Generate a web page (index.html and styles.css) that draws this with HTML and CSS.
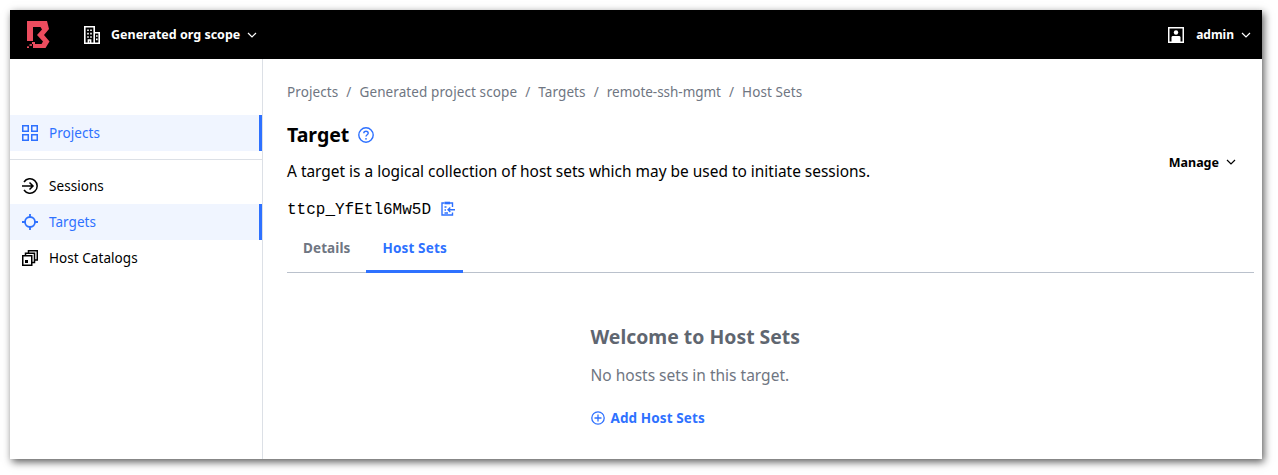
FILE: index.html
```html
<!DOCTYPE html>
<html lang="en">
<head>
    <meta charset="UTF-8">
    <meta name="viewport" content="width=device-width, initial-scale=1.0">
    <title>Target - Host Sets</title>
    <link rel="stylesheet" href="styles.css">
</head>
<body>
    <div class="window">
        <header class="topbar">
            <svg class="logo" viewBox="0 0 23 27" width="23" height="27">
                <path fill="#ec4c5e" d="M0 0H20L22 8L17 14L22.5 20.5L18.5 27H6V23H14.5L16 20.5L10 14L15 8.5L13.5 6H6V20H0Z"/>
                <rect fill="#ec4c5e" x="5" y="21" width="3" height="2"/>
                <rect fill="#ec4c5e" x="2.5" y="23.2" width="2.5" height="1.6"/>
                <rect fill="#ec4c5e" x="0" y="25.4" width="2" height="1.6"/>
            </svg>
            <div class="scope">
                <svg viewBox="0 0 16 18" width="16" height="18" fill="none" stroke="#fff" stroke-width="1.6">
                    <path d="M0.8 17.2V0.8H10.2V17.2M10.2 6.8H15.2V17.2M0 17.2H16"/>
                    <path d="M3.2 4.2H4.8M6.2 4.2H7.8M3.2 7.6H4.8M6.2 7.6H7.8M3.2 11H4.8M6.2 11H7.8M12 10H13.6M12 13.4H13.6M4.4 17V14H6.6V17"/>
                </svg>
                <span>Generated org scope</span>
                <svg class="chev" viewBox="0 0 10 6" width="10" height="6"><path d="M1 1L5 5L9 1"/></svg>
            </div>
            <div class="user">
                <svg viewBox="0 0 16 16" width="16" height="16">
                    <rect x="0.75" y="0.75" width="14.5" height="14.5" fill="none" stroke="#fff" stroke-width="1.5"/>
                    <circle cx="8" cy="5.5" r="2.2" fill="#fff"/>
                    <path fill="#fff" d="M3.5 15V10.5C3.5 9.5 4.2 9 5 9H11C11.8 9 12.5 9.5 12.5 10.5V15Z"/>
                </svg>
                <span>admin</span>
                <svg class="chev" viewBox="0 0 10 6" width="10" height="6"><path d="M1 1L5 5L9 1"/></svg>
            </div>
        </header>
        <div class="layout">
            <aside class="sidebar">
                <a class="nav-item active">
                    <svg viewBox="0 0 16 16" width="16" height="16" fill="none" stroke="currentColor" stroke-width="1.5">
                        <rect x="0.75" y="0.75" width="5.5" height="5.5"/>
                        <rect x="9.75" y="0.75" width="5.5" height="5.5"/>
                        <rect x="0.75" y="9.75" width="5.5" height="5.5"/>
                        <rect x="9.75" y="9.75" width="5.5" height="5.5"/>
                    </svg>
                    Projects
                </a>
                <div class="divider"></div>
                <a class="nav-item">
                    <svg viewBox="0 0 16 16" width="16" height="16" fill="none" stroke="currentColor" stroke-width="1.5">
                        <path d="M2 4A7.2 7.2 0 1 1 2 12"/>
                        <path d="M0 8H11M7.5 4.5L11 8L7.5 11.5"/>
                    </svg>
                    Sessions
                </a>
                <a class="nav-item active">
                    <svg viewBox="0 0 16 16" width="16" height="16" fill="none" stroke="currentColor" stroke-width="1.8">
                        <circle cx="8" cy="8" r="5"/>
                        <path d="M8 0V4M8 12V16M0 8H4M12 8H16"/>
                    </svg>
                    Targets
                </a>
                <a class="nav-item">
                    <svg viewBox="0 0 16 16" width="16" height="16" fill="none" stroke="currentColor" stroke-width="1.5">
                        <rect x="0.75" y="5.75" width="9" height="9.5"/>
                        <path d="M3.5 5V3.2H12.5V12.5H10M6.5 2.8V0.8H15.3V10H13"/>
                        <rect x="3" y="10" width="3" height="3" fill="currentColor" stroke="none"/>
                    </svg>
                    Host Catalogs
                </a>
            </aside>
            <main class="content">
                <nav class="breadcrumbs">
                    <a>Projects</a><span>/</span>
                    <a>Generated project scope</a><span>/</span>
                    <a>Targets</a><span>/</span>
                    <a class="tight">remote-ssh-mgmt</a><span>/</span>
                    <a>Host Sets</a>
                </nav>
                <div class="page-head">
                    <div>
                        <h1>Target
                            <svg viewBox="0 0 16 16" width="16" height="16" fill="none" stroke="#2e71ff" stroke-width="1.4">
                                <circle cx="8" cy="8" r="7.2"/>
                                <path d="M5.8 6.2C5.8 3.6 10.2 3.6 10.2 6.2C10.2 7.8 8 7.8 8 9.6"/>
                                <circle cx="8" cy="11.8" r="0.9" fill="#2e71ff" stroke="none"/>
                            </svg>
                        </h1>
                        <p class="desc">A target is a logical collection of host sets which may be used to initiate sessions.</p>
                        <div class="target-id">
                            <code>ttcp_YfEtl6Mw5D</code>
                            <svg viewBox="0 0 14 15" width="14" height="15" fill="none" stroke="#2e71ff" stroke-width="1.4">
                                <path d="M3.5 2H1V14H11.5V11.5M9 2H11.5V6"/>
                                <rect x="3.5" y="0.7" width="5.5" height="2.6" fill="#2e71ff" stroke="none"/>
                                <path d="M14 8.8H7M9.3 6.5L7 8.8L9.3 11.1M3.5 6H5.5M3.5 9H5M3.5 12H7"/>
                            </svg>
                        </div>
                    </div>
                    <div class="manage">
                        Manage
                        <svg class="chev" viewBox="0 0 10 6" width="10" height="6"><path d="M1 1L5 5L9 1"/></svg>
                    </div>
                </div>
                <div class="tabs">
                    <a class="tab">Details</a>
                    <a class="tab selected">Host Sets</a>
                </div>
                <section class="empty">
                    <h2>Welcome to Host Sets</h2>
                    <p>No hosts sets in this target.</p>
                    <a class="add-link">
                        <svg viewBox="0 0 14 14" width="14" height="14" fill="none" stroke="currentColor" stroke-width="1.3">
                            <circle cx="7" cy="7" r="6.2"/>
                            <path d="M7 3.5V10.5M3.5 7H10.5"/>
                        </svg>
                        Add Host Sets
                    </a>
                </section>
            </main>
        </div>
    </div>
</body>
</html>
```

FILE: styles.css
```css
* {
    box-sizing: border-box;
}

html, body {
    height: 100%;
}

body {
    margin: 0;
    padding: 10px 16px 16px 10px;
    background-color: #fff;
    font-family: "Noto Sans", sans-serif;
    color: #000;
    overflow: hidden;
}

.window {
    height: 449px;
    display: flex;
    flex-direction: column;
    background-color: #fff;
    box-shadow: 2px 3px 8px rgba(0, 0, 0, 0.65);
}

.topbar {
    height: 49px;
    flex: none;
    display: flex;
    align-items: center;
    background-color: #000;
    color: #fff;
    font-size: 12.5px;
    font-weight: 700;
}

.logo {
    margin-left: 17px;
}

.scope {
    margin-left: 34px;
    display: flex;
    align-items: center;
}

.scope span {
    margin: 0 7px 0 11px;
}

.user {
    margin-left: auto;
    margin-right: 11px;
    display: flex;
    align-items: center;
}

.user span {
    margin: 0 7px 0 12px;
    font-size: 12px;
}

.chev {
    fill: none;
    stroke: currentColor;
    stroke-width: 1.2;
}

.layout {
    flex: 1;
    display: flex;
    min-height: 0;
}

.sidebar {
    width: 253px;
    flex: none;
    padding-top: 56px;
    border-right: 1px solid #dce0e6;
}

.nav-item {
    height: 36px;
    display: flex;
    align-items: center;
    gap: 11px;
    padding-left: 12px;
    font-size: 13.5px;
    letter-spacing: 0.05px;
    color: #000;
}

.nav-item.active {
    color: #2e71ff;
    background-color: #f0f5ff;
    border-right: 3px solid #2e71ff;
}

.divider {
    height: 1px;
    margin: 8px 0;
    background-color: #dce0e6;
}

.content {
    flex: 1;
    padding: 0 8px 0 24px;
}

.breadcrumbs {
    height: 20px;
    margin-top: 23px;
    display: flex;
    align-items: center;
    font-size: 13.5px;
    letter-spacing: 0.1px;
    color: #6f7682;
}

.breadcrumbs span {
    margin: 0 8px;
}

.breadcrumbs .tight {
    letter-spacing: -0.03px;
}

.page-head {
    display: flex;
    align-items: center;
    justify-content: space-between;
}

.page-head h1 {
    margin: 19px 0 0;
    height: 28px;
    display: flex;
    align-items: center;
    gap: 9px;
    font-size: 19.5px;
    line-height: 28px;
}

.desc {
    margin: 10px 0 0;
    font-size: 15.45px;
    line-height: 24px;
}

.target-id {
    margin-top: 15px;
    display: flex;
    align-items: center;
    gap: 10px;
    height: 24px;
}

.target-id code {
    font-family: "Liberation Mono", monospace;
    font-size: 16px;
}

.target-id svg {
    margin-bottom: 3px;
}

.manage {
    margin-right: 18px;
    display: flex;
    align-items: center;
    gap: 7px;
    font-size: 12.5px;
    font-weight: 700;
}

.tabs {
    height: 41px;
    margin-top: 10px;
    display: flex;
    border-bottom: 1px solid #bac1cc;
}

.tab {
    padding: 0 16px;
    height: 41px;
    line-height: 32px;
    font-size: 13.5px;
    letter-spacing: 0.1px;
    font-weight: 700;
    color: #6f7682;
}

.tab.selected {
    letter-spacing: 0.15px;
    color: #2e71ff;
    border-bottom: 3px solid #2e71ff;
}

.empty {
    width: 360px;
    margin: 50px auto 0;
}

.empty h2 {
    margin: 0;
    font-size: 19.4px;
    line-height: 28px;
    color: #5f6670;
}

.empty p {
    margin: 12px 0 0;
    font-size: 15.5px;
    line-height: 24px;
    color: #6f7682;
}

.add-link {
    margin-top: 19px;
    display: flex;
    align-items: center;
    gap: 6px;
    height: 24px;
    font-size: 13.5px;
    letter-spacing: 0.1px;
    font-weight: 700;
    color: #2e71ff;
}
```
